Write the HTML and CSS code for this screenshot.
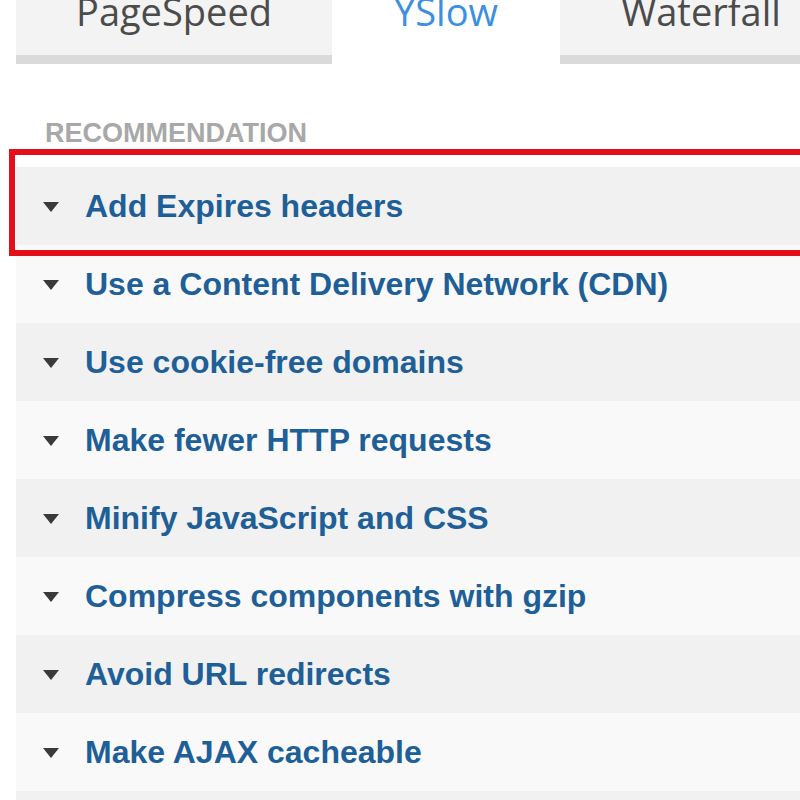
FILE: index.html
```html
<!DOCTYPE html>
<html lang="en">
<head>
    <meta charset="UTF-8">
    <meta name="viewport" content="width=device-width, initial-scale=1.0">
    <title>YSlow</title>
    <link rel="stylesheet" href="styles.css">
</head>
<body>
    <div class="tabs">
        <div class="tab tab-pagespeed"><span>PageSpeed</span></div>
        <div class="tab tab-yslow active"><span>YSlow</span></div>
        <div class="tab tab-waterfall"><span>Waterfall</span></div>
    </div>

    <div class="report">
        <div class="report-head">RECOMMENDATION</div>

        <div class="rules">
            <div class="highlight"></div>
            <div class="rule"><i class="caret"></i><span>Add Expires headers</span></div>
            <div class="rule"><i class="caret"></i><span>Use a Content Delivery Network (CDN)</span></div>
            <div class="rule"><i class="caret"></i><span>Use cookie-free domains</span></div>
            <div class="rule"><i class="caret"></i><span>Make fewer HTTP requests</span></div>
            <div class="rule"><i class="caret"></i><span>Minify JavaScript and CSS</span></div>
            <div class="rule"><i class="caret"></i><span>Compress components with gzip</span></div>
            <div class="rule"><i class="caret"></i><span>Avoid URL redirects</span></div>
            <div class="rule"><i class="caret"></i><span>Make AJAX cacheable</span></div>
            <div class="rule"><i class="caret"></i><span></span></div>
        </div>
    </div>
</body>
</html>
```

FILE: styles.css
```css
html, body {
    margin: 0;
    height: 100%;
    overflow: hidden;
    background: #fff;
}
body {
    font-family: "Liberation Sans", Arial, sans-serif;
}

.tabs {
    display: flex;
    padding-left: 16px;
    width: 900px;
}
.tab {
    height: 55px;
    background-color: #f3f3f3;
    border-bottom: 9px solid #dadada;
    text-align: center;
    overflow: hidden;
    font-family: "Open Sans", sans-serif;
    font-size: 38px;
    color: #4b4b4b;
}
.tab span {
    display: block;
    line-height: 38px;
    margin-top: -8px;
}
.tab-pagespeed { width: 316px; }
.tab-yslow { width: 228px; }
.tab-waterfall { width: 282px; }
.tab.active {
    background-color: #fff;
    border-bottom-color: #fff;
    color: #3d8fe0;
}

.report-head {
    margin: 54px 0 19px 45px;
    font-size: 27px;
    line-height: 30px;
    font-weight: bold;
    color: #a8a8a8;
}

.rules {
    position: relative;
    margin-left: 16px;
}
.rule {
    display: flex;
    align-items: center;
    height: 78px;
    padding-left: 27px;
    background-color: #f9f9f9;
}
.rule:nth-child(even) {
    background-color: #f1f1f1;
}
.rule span {
    font-size: 32px;
    font-weight: bold;
    color: #1e5f98;
}
.caret {
    width: 0;
    height: 0;
    margin: 2px 26px 0 0;
    border-left: 8px solid transparent;
    border-right: 8px solid transparent;
    border-top: 10px solid #3a3a3a;
}

/* red annotation box around the first rule */
.highlight {
    position: absolute;
    top: -18px;
    left: -7px;
    right: -30px;
    height: 95px;
    border: 6px solid #e3101c;
    z-index: 1;
}
```
